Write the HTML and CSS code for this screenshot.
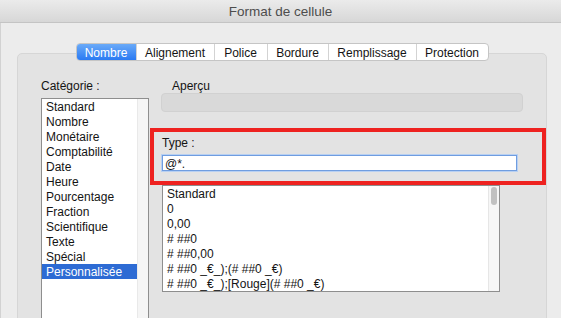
FILE: index.html
```html
<!DOCTYPE html>
<html lang="fr">
<head>
    <meta charset="UTF-8">
    <meta name="viewport" content="width=device-width, initial-scale=1.0">
    <title>Format de cellule</title>
    <link rel="stylesheet" href="styles.css">
</head>
<body>
    <div class="window">
        <div class="titlebar">Format de cellule</div>
        <div class="content">
            <div class="tabs">
                <div class="tab active">Nombre</div>
                <div class="tab t-align">Alignement</div>
                <div class="tab t-police">Police</div>
                <div class="tab t-bordure">Bordure</div>
                <div class="tab t-remp">Remplissage</div>
                <div class="tab t-prot">Protection</div>
            </div>
            <div class="panel">
                <div class="col-left">
                    <div class="label">Catégorie :</div>
                    <div class="listbox categories">
                        <div class="items">
                            <div class="item">Standard</div>
                            <div class="item">Nombre</div>
                            <div class="item">Monétaire</div>
                            <div class="item">Comptabilité</div>
                            <div class="item">Date</div>
                            <div class="item">Heure</div>
                            <div class="item">Pourcentage</div>
                            <div class="item">Fraction</div>
                            <div class="item">Scientifique</div>
                            <div class="item">Texte</div>
                            <div class="item">Spécial</div>
                            <div class="item selected">Personnalisée</div>
                        </div>
                        <div class="gutter"></div>
                    </div>
                </div>
                <div class="col-right">
                    <div class="label preview-label">Aperçu</div>
                    <div class="preview"></div>
                    <div class="highlight">
                        <div class="label">Type :</div>
                        <input class="type-input" type="text" value="@*.">
                    </div>
                    <div class="listbox formats">
                        <div class="items">
                            <div class="item">Standard</div>
                            <div class="item">0</div>
                            <div class="item">0,00</div>
                            <div class="item"># ##0</div>
                            <div class="item"># ##0,00</div>
                            <div class="item"># ##0 _€_);(# ##0 _€)</div>
                            <div class="item"># ##0 _€_);[Rouge](# ##0 _€)</div>
                        </div>
                        <div class="scrollbar"><div class="thumb"></div></div>
                    </div>
                </div>
            </div>
        </div>
    </div>
</body>
</html>
```

FILE: styles.css
```css
body {
    margin: 0;
    background: #ececec;
    font-family: "Liberation Sans", Arial, sans-serif;
    font-size: 12px;
    color: #141414;
    overflow: hidden;
}
.window {
    width: 561px;
    height: 318px;
    overflow: hidden;
    box-shadow: inset 1px 0 #d2d2d2;
}
.titlebar {
    height: 22px;
    line-height: 24px;
    border-bottom: 1px solid #c4c4c4;
    background: linear-gradient(#ebebeb, #d7d7d7);
    text-align: center;
    font-size: 13.5px;
    color: #4d4d4d;
}
.content {
    padding: 20px 14px 0 17px;
}
.tabs {
    position: relative;
    z-index: 1;
    display: flex;
    width: 413px;
    height: 18px;
    margin: 0 auto -8px;
    box-sizing: border-box;
    border: 1px solid #c5c5c5;
    border-radius: 4px;
    background: #fff;
    overflow: hidden;
}
.tab {
    box-sizing: border-box;
    height: 16px;
    line-height: 18px;
    text-align: center;
    border-left: 1px solid #d3d3d3;
    color: #141414;
}
.tab.active {
    width: 59px;
    border-left: none;
    color: #fff;
    background: linear-gradient(#6aaaf8, #2a7af3);
}
.t-align { width: 78px; }
.t-police { width: 53px; }
.t-bordure { width: 61px; }
.t-remp { width: 88px; }
.t-prot { width: 72px; }
.panel {
    display: flex;
    height: 280px;
    box-sizing: border-box;
    padding-left: 23px;
    background: #e3e3e3;
    border: 1px solid #d6d6d6;
    border-radius: 5px;
}
.label {
    height: 15px;
    line-height: 17px;
}
.col-left {
    width: 108px;
    padding-top: 24px;
}
.listbox {
    display: flex;
    box-sizing: border-box;
    background: #fff;
    border: 1px solid #8e8e8e;
}
.categories {
    margin-top: 5px;
    height: 230px;
}
.items {
    flex: 1;
}
.item {
    height: 15px;
    line-height: 17px;
    padding-left: 4px;
    white-space: nowrap;
}
.item.selected {
    background: #2d6bd4;
    color: #fff;
}
.gutter {
    width: 10px;
    background: #f5f5f5;
    border-left: 1px solid #e9e9e9;
}
.col-right {
    flex: 1;
    margin-left: 1px;
    padding-top: 24px;
}
.preview-label {
    padding-left: 22px;
}
.preview {
    width: 362px;
    height: 19px;
    margin-left: 11px;
    box-sizing: border-box;
    background: #d9d9d9;
    border: 1px solid #d1d1d1;
    border-radius: 4px;
}
.highlight {
    height: 57px;
    margin-top: 16px;
    box-sizing: border-box;
    padding: 3px 0 0 8px;
    border: 4px solid #ee2220;
}
.type-input {
    display: block;
    width: 355px;
    height: 16px;
    margin: 5px 0 0 0;
    padding: 1px 2px 0;
    box-sizing: border-box;
    border: 1px solid #6f9de0;
    box-shadow: 0 0 0 1px #b8d0f2;
    outline: none;
    font-family: inherit;
    font-size: 12px;
    color: #141414;
}
.formats {
    width: 338px;
    height: 107px;
    margin-left: 12px;
}
.scrollbar {
    width: 10px;
    background: #f6f6f6;
    border-left: 1px solid #e6e6e6;
}
.thumb {
    width: 6px;
    height: 18px;
    margin: 1px 0 0 2px;
    border-radius: 3px;
    background: #c1c1c1;
}
```
